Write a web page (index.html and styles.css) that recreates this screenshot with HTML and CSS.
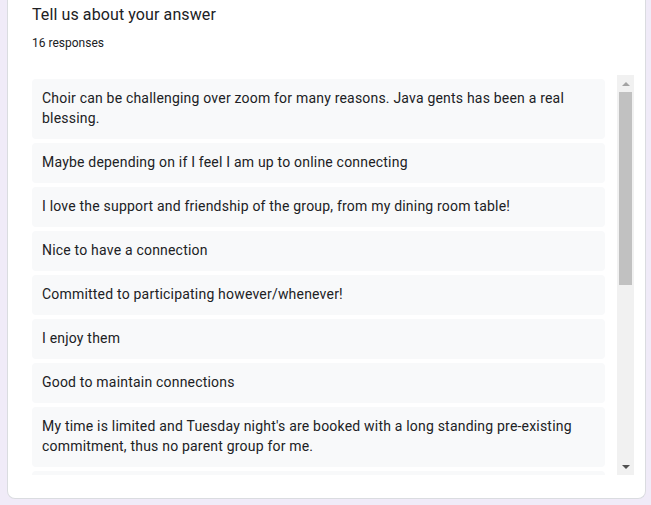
FILE: index.html
```html
<!DOCTYPE html>
<html>
<head>
<meta charset="utf-8">
<link rel="stylesheet" href="styles.css">
</head>
<body>
<div class="card">
  <div class="title">Tell us about your answer</div>
  <div class="count">16 responses</div>
  <div class="scroll">
    <div class="list">
      <div class="item">Choir can be challenging over zoom for many reasons. Java gents has been a real blessing.</div>
      <div class="item">Maybe depending on if I feel I am up to online connecting</div>
      <div class="item">I love the support and friendship of the group, from my dining room table!</div>
      <div class="item">Nice to have a connection</div>
      <div class="item">Committed to participating however/whenever!</div>
      <div class="item">I enjoy them</div>
      <div class="item">Good to maintain connections</div>
      <div class="item">My time is limited and Tuesday night's are booked with a long standing pre-existing commitment, thus no parent group for me.</div>
      <div class="item empty"></div>
    </div>
    <div class="bar">
      <div class="arrow up"></div>
      <div class="track"><div class="thumb"></div></div>
      <div class="arrow down"></div>
    </div>
  </div>
</div>
</body>
</html>
```
FILE: styles.css
```css
html, body {
  margin: 0;
  padding: 0;
}
body {
  background: #f0ebf8;
  padding: 0 5px 7px 7px;
  font-family: Roboto, "Liberation Sans", sans-serif;
  color: #202124;
}
.card {
  background: #fff;
  border: 1px solid #dadce0;
  border-top: none;
  border-radius: 0 0 8px 8px;
  padding: 3px 11px 23px 24px;
}
.title {
  font-size: 16px;
  line-height: 24px;
  letter-spacing: 0.1px;
}
.count {
  font-size: 12px;
  line-height: 16px;
  margin-top: 8px;
}
.scroll {
  display: flex;
  margin-top: 24px;
  height: 400px;
}
.list {
  flex: 1;
  overflow: hidden;
  padding-top: 4px;
  display: flex;
  flex-direction: column;
  gap: 4px;
}
.item {
  flex-shrink: 0;
  background: #f8f9fa;
  border-radius: 4px;
  padding: 9px 10px 11px;
  font-size: 14px;
  line-height: 20px;
  letter-spacing: 0.2px;
}
.item.empty {
  height: 20px;
}
.bar {
  width: 17px;
  margin-left: 12px;
  background: #f1f1f1;
  display: flex;
  flex-direction: column;
}
.arrow {
  height: 17px;
  display: flex;
  align-items: center;
  justify-content: center;
}
.arrow::before {
  content: "";
  width: 0;
  height: 0;
  border-left: 4px solid transparent;
  border-right: 4px solid transparent;
}
.arrow.up::before {
  border-bottom: 4px solid #a3a3a3;
}
.arrow.down::before {
  border-top: 4px solid #505050;
}
.track {
  flex: 1;
  padding: 0 2px;
}
.thumb {
  height: 193px;
  background: #c1c1c1;
}
```
